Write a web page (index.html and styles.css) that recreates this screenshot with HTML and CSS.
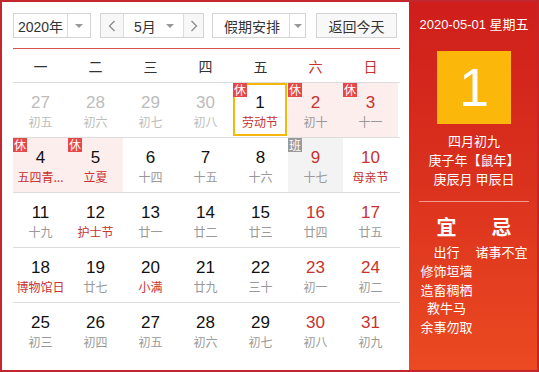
FILE: index.html
```html
<!DOCTYPE html>
<html lang="zh-CN">
<head>
<meta charset="utf-8">
<title>万年历</title>
<link rel="stylesheet" href="styles.css">
</head>
<body>
<div class="cal">
  <div class="main">
    <div class="toolbar">
      <div class="sel sel-year">
        <span class="sel-text">2020年</span>
        <span class="sel-arrow"><i class="tri"></i></span>
      </div>
      <div class="month-group">
        <span class="mbtn mprev"><svg width="8" height="12" viewBox="0 0 8 12"><path d="M6.5 1 L1.5 6 L6.5 11" fill="none" stroke="#888" stroke-width="1.2"/></svg></span>
        <span class="mmid"><span class="mtext">5月</span><i class="tri"></i></span>
        <span class="mbtn mnext"><svg width="8" height="12" viewBox="0 0 8 12"><path d="M1.5 1 L6.5 6 L1.5 11" fill="none" stroke="#888" stroke-width="1.2"/></svg></span>
      </div>
      <div class="sel sel-hol">
        <span class="sel-text">假期安排</span>
        <span class="sel-arrow"><i class="tri"></i></span>
      </div>
      <div class="today-btn">返回今天</div>
    </div>
    <div class="weekhead">
      <span>一</span><span>二</span><span>三</span><span>四</span><span>五</span><span class="we">六</span><span class="we">日</span>
    </div>
    <div class="grid">
      <div class="row">
        <div class="cell prev"><b>27</b><em>初五</em></div>
        <div class="cell prev"><b>28</b><em>初六</em></div>
        <div class="cell prev"><b>29</b><em>初七</em></div>
        <div class="cell prev"><b>30</b><em>初八</em></div>
        <div class="cell today"><span class="badge">休</span><b>1</b><em class="fest">劳动节</em></div>
        <div class="cell rest"><span class="badge">休</span><b class="red">2</b><em>初十</em></div>
        <div class="cell rest"><span class="badge">休</span><b class="red">3</b><em>十一</em></div>
      </div>
      <div class="row">
        <div class="cell rest"><span class="badge">休</span><b>4</b><em class="fest">五四青...</em></div>
        <div class="cell rest"><span class="badge">休</span><b>5</b><em class="fest">立夏</em></div>
        <div class="cell"><b>6</b><em>十四</em></div>
        <div class="cell"><b>7</b><em>十五</em></div>
        <div class="cell"><b>8</b><em>十六</em></div>
        <div class="cell work"><span class="badge gray">班</span><b class="red">9</b><em>十七</em></div>
        <div class="cell"><b class="red">10</b><em class="fest">母亲节</em></div>
      </div>
      <div class="row">
        <div class="cell"><b>11</b><em>十九</em></div>
        <div class="cell"><b>12</b><em class="fest">护士节</em></div>
        <div class="cell"><b>13</b><em>廿一</em></div>
        <div class="cell"><b>14</b><em>廿二</em></div>
        <div class="cell"><b>15</b><em>廿三</em></div>
        <div class="cell"><b class="red">16</b><em>廿四</em></div>
        <div class="cell"><b class="red">17</b><em>廿五</em></div>
      </div>
      <div class="row">
        <div class="cell"><b>18</b><em class="fest">博物馆日</em></div>
        <div class="cell"><b>19</b><em>廿七</em></div>
        <div class="cell"><b>20</b><em class="fest">小满</em></div>
        <div class="cell"><b>21</b><em>廿九</em></div>
        <div class="cell"><b>22</b><em>三十</em></div>
        <div class="cell"><b class="red">23</b><em>初一</em></div>
        <div class="cell"><b class="red">24</b><em>初二</em></div>
      </div>
      <div class="row">
        <div class="cell"><b>25</b><em>初三</em></div>
        <div class="cell"><b>26</b><em>初四</em></div>
        <div class="cell"><b>27</b><em>初五</em></div>
        <div class="cell"><b>28</b><em>初六</em></div>
        <div class="cell"><b>29</b><em>初七</em></div>
        <div class="cell"><b class="red">30</b><em>初八</em></div>
        <div class="cell"><b class="red">31</b><em>初九</em></div>
      </div>
    </div>
  </div>
  <div class="side">
    <div class="side-date">2020-05-01 星期五</div>
    <div class="big-day">1</div>
    <div class="lunar">
      <div>四月初九</div>
      <div>庚子年【鼠年】</div>
      <div>庚辰月 甲辰日</div>
    </div>
    <div class="sep"></div>
    <div class="yiji">
      <div class="col">
        <div class="yj-title">宜</div>
        <div>出行</div>
        <div>修饰垣墙</div>
        <div>造畜稠栖</div>
        <div>教牛马</div>
        <div>余事勿取</div>
      </div>
      <div class="col">
        <div class="yj-title">忌</div>
        <div>诸事不宜</div>
      </div>
    </div>
  </div>
</div>
</body>
</html>
```
FILE: styles.css
```css
* { box-sizing: border-box; }
html, body { margin: 0; padding: 0; background: #fff; }
body {
  font-family: "Liberation Sans", "Noto Sans CJK SC", sans-serif;
  color: #333;
}
.cal {
  width: 539px;
  height: 372px;
  border: 2px solid #c1272d;
  display: flex;
}
.main {
  width: 407px;
  padding: 11px 9px 0 11px;
}
.toolbar {
  display: flex;
  height: 25px;
  align-items: stretch;
}
.sel {
  display: flex;
  border: 1px solid #d4d4d4;
  background: #fff;
  font-size: 14px;
  color: #333;
}
.sel-text {
  flex: 1;
  display: flex;
  align-items: center;
  justify-content: center;
}
.sel-arrow {
  border-left: 1px solid #dcdcdc;
  display: flex;
  align-items: center;
  justify-content: center;
}
.tri {
  display: block;
  width: 0;
  height: 0;
  border-left: 4px solid transparent;
  border-right: 4px solid transparent;
  border-top: 4px solid #999;
}
.sel-year { width: 78px; }
.sel-year .sel-arrow { width: 23px; }
.sel-hol { width: 94px; margin-left: 8px; }
.sel-hol .sel-text { padding-left: 2px; }
.sel-hol .sel-arrow { width: 16px; }
.month-group {
  display: flex;
  width: 104px;
  margin-left: 9px;
  border: 1px solid #d4d4d4;
  font-size: 14px;
}
.mbtn {
  display: flex;
  align-items: center;
  justify-content: center;
  background: #f7f7f7;
}
.mprev { width: 23px; border-right: 1px solid #dcdcdc; }
.mnext { width: 20px; border-left: 1px solid #dcdcdc; }
.mmid {
  flex: 1;
  display: flex;
  align-items: center;
  justify-content: space-between;
  padding: 0 9px 0 10px;
  background: #fff;
}
.today-btn {
  width: 81px;
  margin-left: 10px;
  border: 1px solid #d4d4d4;
  background: #f8f8f8;
  font-size: 14px;
  display: flex;
  align-items: center;
  justify-content: center;
}
.weekhead {
  margin-top: 10px;
  border-top: 1px solid #d9534f;
  border-bottom: 1px solid #dddddd;
  height: 35px;
  display: grid;
  grid-template-columns: repeat(7, 55px);
  align-items: center;
  font-size: 14px;
  color: #333;
  font-family: "Noto Sans CJK SC", sans-serif;
}
.weekhead span { text-align: center; }
.weekhead .we { color: #c8322f; }
.row {
  display: grid;
  grid-template-columns: repeat(7, 55px);
  height: 55px;
  border-bottom: 1px solid #dddddd;
}
.row:last-child { border-bottom: none; }
.cell {
  position: relative;
  display: flex;
  flex-direction: column;
  align-items: center;
  padding-top: 10px;
}
.cell b {
  font-weight: normal;
  font-size: 17px;
  line-height: 20px;
  color: #111;
}
.cell em {
  font-style: normal;
  font-size: 12px;
  line-height: 18px;
  color: #999;
  font-family: "Noto Sans CJK SC", sans-serif;
  white-space: nowrap;
}
.cell b.red { color: #c8322f; }
.cell em.fest { color: #c8322f; }
.cell.prev b, .cell.prev em { color: #bcbcbc; }
.cell.rest { background: #fdeeee; }
.cell.work { background: #f3f3f3; }
.cell.today {
  border: 2px solid #f5b70a;
  margin: 0 1px 1px 0;
  padding-top: 8px;
}
.badge {
  position: absolute;
  left: 0;
  top: 0;
  width: 14px;
  height: 14px;
  background: #e54848;
  color: #fff;
  font-size: 12px;
  line-height: 14px;
  text-align: center;
  font-family: "Noto Sans CJK SC", sans-serif;
}
.cell.today .badge { left: -2px; top: -2px; }
.badge.gray { background: #999; }
.side {
  flex: 1;
  background: linear-gradient(180deg, #cf1e1b 0%, #db321e 50%, #eb4a22 100%);
  color: #fff;
  padding: 14px 8px 0 10px;
  display: flex;
  flex-direction: column;
  align-items: center;
  font-family: "Liberation Sans", "Noto Sans CJK SC", sans-serif;
}
.side-date {
  font-size: 13px;
  line-height: 18px;
  white-space: nowrap;
}
.big-day {
  margin-top: 17px;
  width: 74px;
  height: 73px;
  background: #fbb70a;
  font-size: 54px;
  line-height: 73px;
  text-align: center;
}
.lunar {
  margin-top: 7px;
  font-size: 13px;
  line-height: 19px;
  text-align: center;
  font-family: "Noto Sans CJK SC", sans-serif;
}
.sep {
  margin-top: 13px;
  width: 110px;
  height: 1px;
  background: rgba(255, 200, 190, 0.7);
}
.yiji {
  margin-top: 12px;
  display: flex;
  width: 110px;
  font-size: 13px;
  line-height: 18.8px;
  font-family: "Noto Sans CJK SC", sans-serif;
}
.col {
  width: 55px;
  text-align: center;
  white-space: nowrap;
}
.yj-title {
  font-size: 20px;
  line-height: 26px;
  font-weight: bold;
  margin-bottom: 3px;
}
```
